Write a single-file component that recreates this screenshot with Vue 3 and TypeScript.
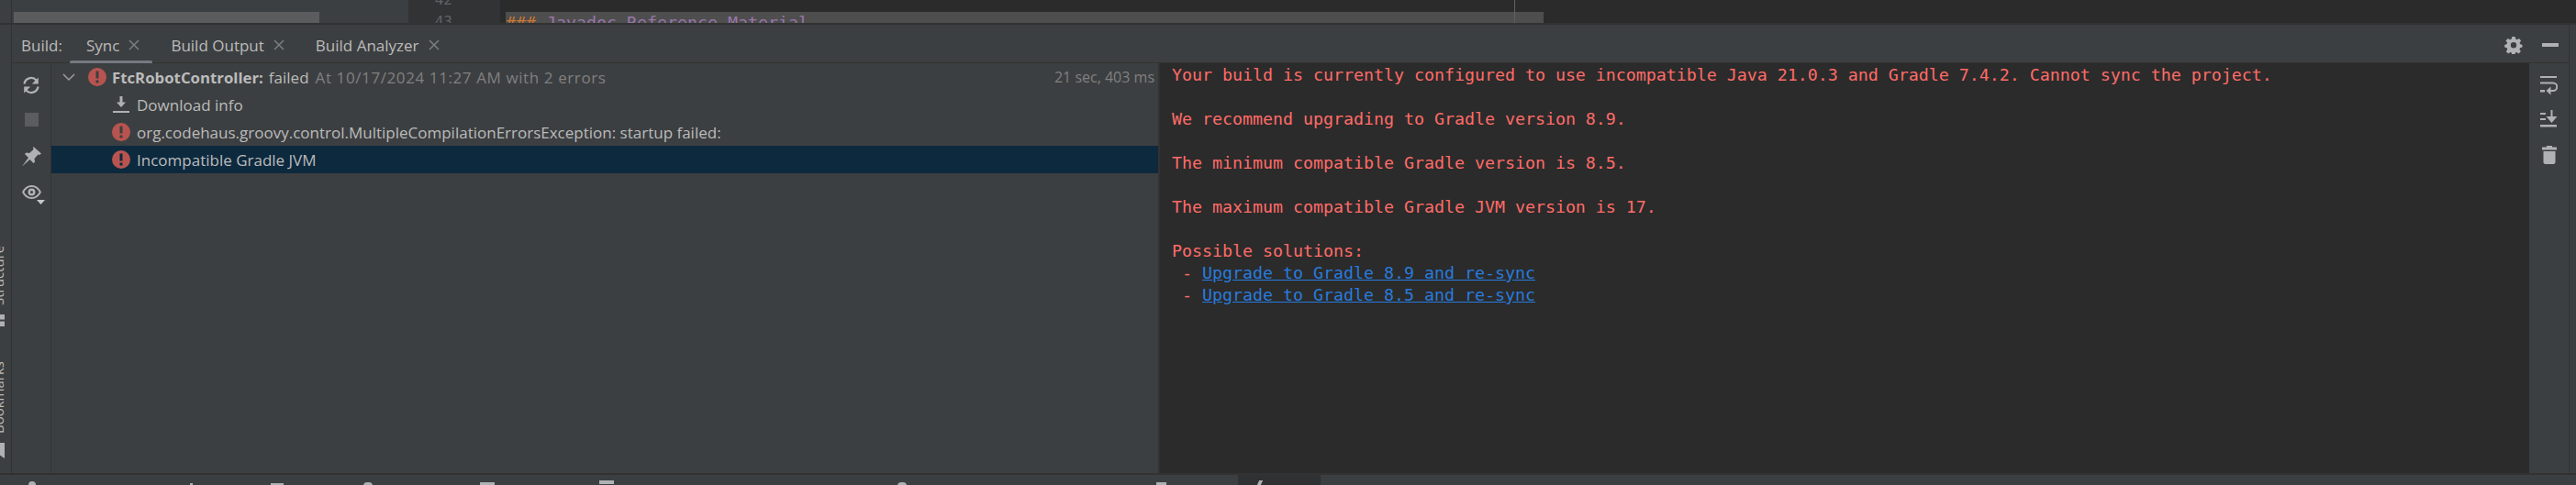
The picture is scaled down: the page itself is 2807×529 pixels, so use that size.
<script setup lang="ts">
const tabs = [
  { label: 'Sync', active: true },
  { label: 'Build Output', active: false },
  { label: 'Build Analyzer', active: false },
]
const lines = [
  'Your build is currently configured to use incompatible Java 21.0.3 and Gradle 7.4.2. Cannot sync the project.',
  '',
  'We recommend upgrading to Gradle version 8.9.',
  '',
  'The minimum compatible Gradle version is 8.5.',
  '',
  'The maximum compatible Gradle JVM version is 17.',
  '',
  'Possible solutions:',
]
const links = ['Upgrade to Gradle 8.9 and re-sync', 'Upgrade to Gradle 8.5 and re-sync']
</script>

<template>
  <div class="ide">
    <div class="top">
      <div class="rail-top"></div>
      <div class="nav"><div class="thumb"></div></div>
      <div class="gutter"><span>42</span><span>43</span></div>
      <div class="editor">
        <div class="band"><span class="hash">###</span> <span class="head">Javadoc Reference Material</span></div>
        <div class="caret"></div>
      </div>
    </div>

    <div class="body">
      <div class="rail-left">
        <div class="vtext structure">Structure</div>
        <svg class="rail-icon" width="5" height="13" viewBox="0 0 5 13"><path d="M0 0h5v5.500H0zM0 7.500h5V13H0z" fill="#afb1b3" /></svg>
        <div class="vtext bookmarks">Bookmarks</div>
        <svg class="rail-icon" width="5" height="17" viewBox="0 0 5 17"><path d="M0 0h5v17L0 13.500z" fill="#afb1b3" /></svg>
      </div>

      <div class="panel">
        <div class="header">
          <span class="build-label">Build:</span>
          <div v-for="t in tabs" :key="t.label" class="tab" :class="{ active: t.active }">
            <span>{{ t.label }}</span>
            <svg width="12" height="12" viewBox="0 0 12 12"><path d="M1 1l10 10M11 1L1 11" stroke="#7c7f81" stroke-width="1.500" fill="none" /></svg>
          </div>
          <div class="spacer"></div>
          <svg class="gear" width="20" height="20" viewBox="0 0 20 20">
            <path fill="#afb1b3" fill-rule="evenodd" d="M8.300 1h3.400l.5 2.600 1.500.7 2.300-1.400 2.200 2.600-1.600 2.100.4 1.500 2.500.8v2.600l-2.500.8-.6 1.600 1.500 2.100-2.300 2.500-2.200-1.500-1.500.6-.5 2.600H8.300l-.5-2.600-1.500-.6L4 19.500 1.800 17l1.500-2.100-.6-1.600-2.500-.8V9.900l2.500-.8.4-1.500L1.500 5.500l2.200-2.600L6 4.300l1.800-.7zM10 7a3.200 3.200 0 100 6.400A3.200 3.200 0 0010 7z" />
          </svg>
          <div class="minus"></div>
        </div>

        <div class="content">
          <div class="toolbar">
            <svg width="20" height="20" viewBox="0 0 20 20">
              <path d="M2.500 8.500A7.500 7.500 0 0 1 15.500 4.500" stroke="#afb1b3" stroke-width="2.200" fill="none" />
              <path d="M17.800 1.500v7h-7z" fill="#afb1b3" />
              <path d="M17.500 11.500A7.500 7.500 0 0 1 4.500 15.500" stroke="#afb1b3" stroke-width="2.200" fill="none" />
              <path d="M2.200 18.500v-7h7z" fill="#afb1b3" />
            </svg>
            <div class="stop"></div>
            <svg width="22" height="22" viewBox="0 0 22 22" class="pin">
              <path d="M13.500 0L22 7.500l-2 1.500-1.500-.5-4 4.500.5 3.500-1.500 1.500-4-4L1 21.500 8 12 4 8l1.500-1.500 3.500.5 4.500-4-.5-1.500z" fill="#afb1b3" />
            </svg>
            <div class="eye-wrap">
              <svg width="21" height="15" viewBox="0 0 21 15">
                <path fill="#afb1b3" fill-rule="evenodd" d="M10.500 0C15 0 19 3 21 7.500 19 12 15 15 10.500 15S2 12 0 7.500C2 3 6 0 10.500 0zm0 2C7 2 3.900 4 2.300 7.500 3.900 11 7 13 10.500 13s6.600-2 8.200-5.500C17.100 4 14 2 10.500 2zm0 1.500a4 4 0 110 8 4 4 0 010-8zm0 2.500a1.500 1.500 0 100 3 1.500 1.500 0 000-3z" />
              </svg>
              <svg class="caret-down" width="9" height="5" viewBox="0 0 9 5"><path d="M0 0h9L4.500 5z" fill="#c5c7c9" /></svg>
            </div>
          </div>

          <div class="tree">
            <div class="row">
              <svg class="chev" width="14" height="9" viewBox="0 0 14 9"><path d="M1 1l6 6 6-6" stroke="#9a9da0" stroke-width="1.500" fill="none" /></svg>
              <svg class="err first" width="20" height="20" viewBox="0 0 20 20"><circle cx="10" cy="10" r="10" fill="#b85450" /><path d="M8.500 3.500h3v8h-3zM8.500 13.500h3v3h-3z" fill="#3c3f41" /></svg>
              <span class="bold">FtcRobotController:</span>
              <span class="failed">failed</span>
              <span class="muted">At 10/17/2024 11:27 AM with 2 errors</span>
              <span class="time">21 sec, 403 ms</span>
            </div>
            <div class="row child">
              <svg class="dl" width="18" height="18" viewBox="0 0 18 18"><path d="M7.500 0h3v6.500H14L9 12 4 6.500h3.500zM0 16h18v2H0z" fill="#afb1b3" /></svg>
              <span>Download info</span>
            </div>
            <div class="row child">
              <svg class="err" width="20" height="20" viewBox="0 0 20 20"><circle cx="10" cy="10" r="10" fill="#b85450" /><path d="M8.500 3.500h3v8h-3zM8.500 13.500h3v3h-3z" fill="#3c3f41" /></svg>
              <span>org.codehaus.groovy.control.MultipleCompilationErrorsException: startup failed:</span>
            </div>
            <div class="row child selected">
              <svg class="err" width="20" height="20" viewBox="0 0 20 20"><circle cx="10" cy="10" r="10" fill="#b85450" /><path d="M8.500 3.500h3v8h-3zM8.500 13.500h3v3h-3z" fill="#0d293e" /></svg>
              <span>Incompatible Gradle JVM</span>
            </div>
          </div>

          <div class="console">
            <div v-for="(l, i) in lines" :key="i" class="line">{{ l }}</div>
            <div v-for="l in links" :key="l" class="line"><span> - </span><a class="link">{{ l }}</a></div>
          </div>

          <div class="side">
            <svg width="19" height="21" viewBox="0 0 19 21">
              <path d="M0 0h18v2H0zM0 15h5v2.500H0z" fill="#afb1b3" />
              <path d="M0 7.500h14a3.800 3.800 0 0 1 0 8.500H9" stroke="#afb1b3" stroke-width="2" fill="none" />
              <path d="M11.500 11.500v9L6.500 16z" fill="#afb1b3" />
            </svg>
            <svg width="19" height="19" viewBox="0 0 19 19">
              <path d="M0 3h6v2H0zM0 9h6v2H0zM0 16h18v2.500H0z" fill="#afb1b3" />
              <path d="M11.500 0h2v7h5l-6 7-6-7h5z" fill="#afb1b3" />
            </svg>
            <svg class="trash" width="16" height="20" viewBox="0 0 16 20">
              <path d="M5 0h6v1.500h5v3H0v-3h5zM1.500 6h13v12.500L13 20H3l-1.500-1.500z" fill="#afb1b3" />
            </svg>
          </div>
        </div>
      </div>
      <div class="rail-right"></div>
    </div>

    <div class="bottom">
      <i class="sl s1"></i><i class="sl s2"></i><i class="sl s3"></i><i class="sl s4"></i>
      <i class="sl s5"></i><i class="sl s6"></i><i class="sl s7"></i><i class="sl s8"></i>
      <div class="bottom-active"><i class="tick"></i></div>
    </div>
  </div>
</template>

<style>
html, body { margin: 0; background: #3c3f41; }
</style>

<style scoped>
.ide {
  width: 2807px;
  height: 529px;
  display: flex;
  flex-direction: column;
  overflow: hidden;
  background: #3c3f41;
  color: #bbbbbb;
  font-family: "Open Sans", "Noto Sans", sans-serif;
  font-size: 17px;
}
.top {
  height: 27px;
  flex: none;
  display: flex;
  box-sizing: border-box;
  border-bottom: 2px solid #323232;
  overflow: hidden;
}
.rail-top { width: 12px; border-right: 1px solid #323232; flex: none; }
.nav { width: 432px; flex: none; padding: 13px 0 0 2px; box-sizing: border-box; }
.thumb { width: 333px; height: 12px; background: #5a5c5e; }
.gutter {
  width: 100px;
  flex: none;
  background: #313335;
  display: flex;
  flex-direction: column;
  align-items: flex-end;
  padding-right: 52px;
  box-sizing: border-box;
  color: #606366;
  font: 16px/24px "DejaVu Sans Mono", monospace;
}
.gutter span { height: 24px; flex: none; transform: translateY(-12px); }
.editor { flex: 1; background: #2b2b2b; padding: 13px 0 0 6px; display: flex; }
.band {
  width: 1131px;
  height: 12px;
  background: #4e4e4e;
  font: 18.27px/24px "DejaVu Sans Mono", monospace;
  white-space: pre;
  overflow: hidden;
  flex: none;
}
.hash { color: #cc7832; }
.head { color: #9876aa; }
.caret { width: 1px; height: 25px; margin: -13px 0 0 -32px; background: #606060; flex: none; }

.body { flex: none; height: 489px; display: flex; }
.rail-left {
  width: 12px;
  flex: none;
  border-right: 1px solid #323232;
  overflow: hidden;
  display: flex;
  flex-direction: column;
  align-items: flex-start;
  padding-top: 238px;
}
.vtext {
  writing-mode: vertical-rl;
  transform: rotate(180deg);
  font-size: 15px;
  line-height: 16px;
  margin-left: -10px;
  color: #bbbbbb;
  white-space: nowrap;
  flex: none;
}
.structure { height: 68px; }
.bookmarks { height: 81px; margin-top: 36px; }
.rail-icon { flex: none; margin-top: 10px; }

.panel { flex: 1; min-width: 0; display: flex; flex-direction: column; }
.header {
  height: 42px;
  flex: none;
  box-sizing: border-box;
  border-bottom: 1px solid #323232;
  padding-top: 3px;
  display: flex;
  align-items: center;
}
.build-label { margin-left: 10px; width: 53px; }
.tab {
  height: 38px;
  display: flex;
  align-items: center;
  gap: 10px;
  padding: 0 14px 0 18px;
  position: relative;
}
.tab + .tab { margin-left: 2px; }
.tab.active::after {
  content: "";
  position: absolute;
  left: 0;
  right: 0;
  bottom: -1px;
  height: 3px;
  border-radius: 2px 2px 0 0;
  background: #747a80;
}
.spacer { flex: 1; }
.gear { margin-right: 21px; }
.minus { width: 18px; height: 4px; background: #afb1b3; margin-right: 11px; }

.content { flex: 1; min-height: 0; display: flex; }
.toolbar {
  width: 42px;
  flex: none;
  border-right: 1px solid #323232;
  display: flex;
  flex-direction: column;
  align-items: center;
  padding-top: 14px;
}
.toolbar svg { flex: none; }
.stop { width: 15px; height: 15px; background: #5a5c5e; margin-top: 20px; }
.pin { margin-top: 22px; }
.eye-wrap { margin-top: 20px; position: relative; height: 15px; }
.eye-wrap svg { display: block; }
.caret-down { position: absolute; right: -4px; top: 16px; }

.tree { width: 1206px; flex: none; border-right: 2px solid #323232; }
.row { height: 30px; display: flex; align-items: center; white-space: nowrap; padding-left: 12px; }
.chev { margin-right: 14px; flex: none; }
.err.first { margin-right: 6px; }
.bold { font-weight: 700; font-size: 16.8px; }
.failed { margin-left: 6px; }
.muted { margin-left: 7px; color: #808080; letter-spacing: 0.6px; }
.time { margin-left: auto; margin-right: 4px; color: #808080; font-size: 16px; }
.child { padding-left: 66px; }
.child svg { margin-right: 7px; flex: none; }
.dl { margin-left: 1px; margin-right: 8px !important; }
.selected { background: #0d293e; }

.console {
  flex: 1;
  min-width: 0;
  background: #2b2b2b;
  padding: 1px 0 0 13px;
  font: 18.27px/24px "DejaVu Sans Mono", monospace;
  color: #ff6b68;
  white-space: pre;
}
.line { height: 24px; }
.link { color: #287bde; text-decoration: underline; }

.side {
  width: 43px;
  flex: none;
  display: flex;
  flex-direction: column;
  align-items: center;
  padding-top: 14px;
  gap: 16px;
}
.trash { margin-top: 4px; }
.rail-right { width: 8px; flex: none; border-left: 1px solid #323232; box-sizing: border-box; }

.bottom {
  flex: 1;
  min-height: 0;
  box-sizing: border-box;
  border-top: 2px solid #323232;
  display: flex;
  overflow: hidden;
}
.sl { display: block; flex: none; margin-top: 8px; height: 4px; background: #afb1b3; }
.s1 { width: 8px; margin-left: 31px; margin-top: 7px; border-radius: 4px 4px 0 0; }
.s2 { width: 3px; margin-left: 168px; margin-top: 9px; }
.s3 { width: 14px; margin-left: 85px; margin-top: 9px; }
.s4 { width: 10px; margin-left: 87px; border-radius: 5px 5px 0 0; }
.s5 { width: 16px; margin-left: 117px; }
.s6 { width: 16px; margin-left: 114px; margin-top: 6px; }
.s7 { width: 10px; margin-left: 309px; border-radius: 5px 5px 0 0; }
.s8 { width: 11px; margin-left: 272px; }
.bottom-active { width: 90px; margin-left: 78px; background: #2f3133; display: flex; padding-left: 22px; box-sizing: border-box; }
.tick { display: block; width: 4px; height: 5px; margin-top: 6px; background: #afb1b3; transform: skewX(-25deg); }
</style>
